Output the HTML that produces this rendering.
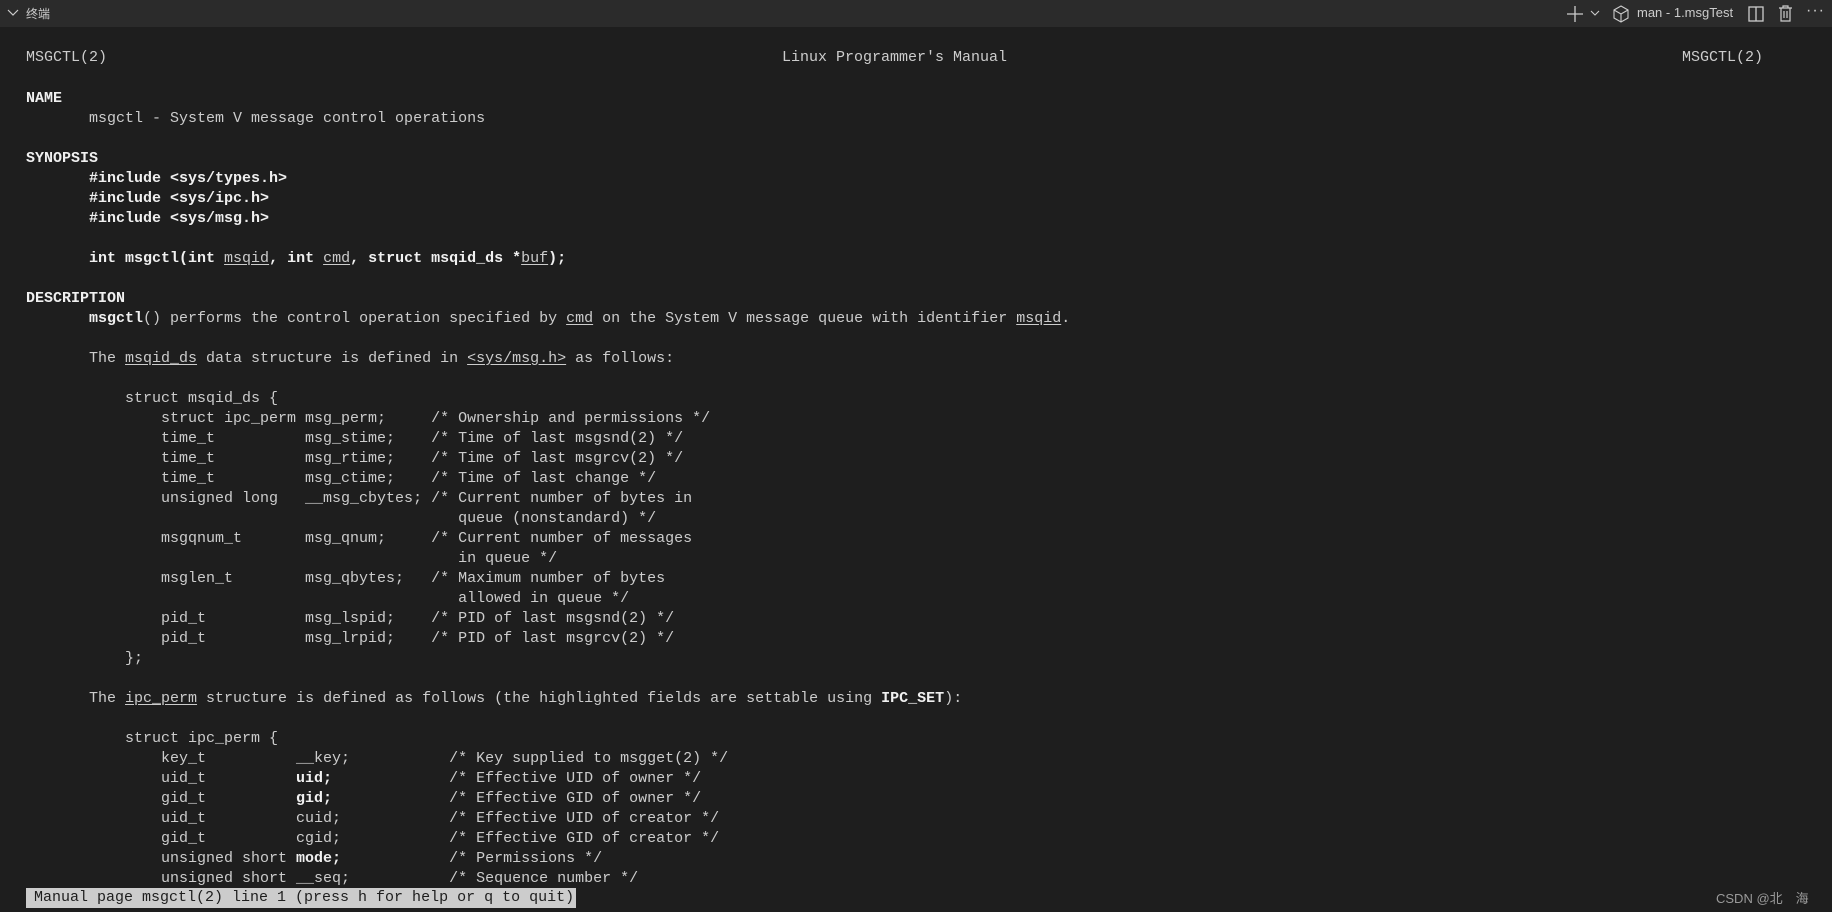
<!DOCTYPE html>
<html><head><meta charset="utf-8"><style>
html,body{margin:0;padding:0;width:1832px;height:912px;overflow:hidden;background:#1e1e1e;}
.hdr{position:absolute;left:0;top:0;width:1832px;height:27px;background:#2b2b2b;font-family:"Liberation Sans","Noto Sans CJK SC",sans-serif;color:#cccccc;font-size:13px;}
.hdr span{position:absolute;top:5px;}
pre{position:absolute;left:26px;top:49px;margin:0;font-family:"Liberation Mono",monospace;font-size:15px;line-height:20px;color:#cccccc;}
b{color:#f0f0f0;font-weight:bold}
u{text-decoration:underline;text-underline-offset:2px}
.t{position:absolute;top:48px;font-family:"Liberation Mono",monospace;font-size:15px;line-height:20px;color:#cccccc;}
.status{position:absolute;left:26px;top:888px;height:20px;background:#cccccc;color:#1e1e1e;font-family:"Liberation Mono",monospace;font-size:15px;line-height:20px;padding:0 2px 0 8px;}
.wm{position:absolute;left:1716px;top:888px;font-family:"Liberation Sans","Noto Sans CJK SC",sans-serif;font-size:13px;color:#9a9a9a;}
</style></head><body>
<div class="hdr">
<svg style="position:absolute;left:7px;top:8px" width="12" height="10"><path d="M1 2 L6 7 L11 2" stroke="#ccc" fill="none" stroke-width="1.2"/></svg>
<span style="left:26px;font-size:12px">终端</span>
<svg style="position:absolute;left:1566px;top:5px" width="18" height="18"><path d="M9 1V17M1 9H17" stroke="#ccc" stroke-width="1.3"/></svg>
<svg style="position:absolute;left:1590px;top:9px" width="10" height="8"><path d="M1 2L5 6L9 2" stroke="#ccc" fill="none" stroke-width="1.1"/></svg>
<svg style="position:absolute;left:1613px;top:5px" width="16" height="18"><path d="M8 1L15 5V13L8 17L1 13V5Z M1 5L8 9L15 5 M8 9V17" stroke="#ccc" fill="none" stroke-width="1.1"/></svg>
<span style="left:1637px">man - 1.msgTest</span>
<svg style="position:absolute;left:1748px;top:6px" width="16" height="16"><rect x="1" y="1" width="14" height="14" stroke="#ccc" fill="none" stroke-width="1.3"/><path d="M8 1V15" stroke="#ccc" stroke-width="1.3"/></svg>
<svg style="position:absolute;left:1778px;top:5px" width="15" height="17"><path d="M1 3H14 M5 3V1H10V3 M3 3V16H12V3 M6 6V13 M9 6V13" stroke="#ccc" fill="none" stroke-width="1.2"/></svg>
<span style="left:1806px;top:2px;font-size:16px;letter-spacing:1px">···</span>
</div>
<div class="t" style="left:26px">MSGCTL(2)</div>
<div class="t" style="left:782px">Linux Programmer's Manual</div>
<div class="t" style="left:1682px">MSGCTL(2)</div>
<pre>


<b>NAME</b>
       msgctl - System V message control operations

<b>SYNOPSIS</b>
       <b>#include &lt;sys/types.h&gt;</b>
       <b>#include &lt;sys/ipc.h&gt;</b>
       <b>#include &lt;sys/msg.h&gt;</b>

       <b>int msgctl(int </b><u>msqid</u><b>, int </b><u>cmd</u><b>, struct msqid_ds *</b><u>buf</u><b>);</b>

<b>DESCRIPTION</b>
       <b>msgctl</b>() performs the control operation specified by <u>cmd</u> on the System V message queue with identifier <u>msqid</u>.

       The <u>msqid_ds</u> data structure is defined in <u>&lt;sys/msg.h&gt;</u> as follows:

           struct msqid_ds {
               struct ipc_perm msg_perm;     /* Ownership and permissions */
               time_t          msg_stime;    /* Time of last msgsnd(2) */
               time_t          msg_rtime;    /* Time of last msgrcv(2) */
               time_t          msg_ctime;    /* Time of last change */
               unsigned long   __msg_cbytes; /* Current number of bytes in
                                                queue (nonstandard) */
               msgqnum_t       msg_qnum;     /* Current number of messages
                                                in queue */
               msglen_t        msg_qbytes;   /* Maximum number of bytes
                                                allowed in queue */
               pid_t           msg_lspid;    /* PID of last msgsnd(2) */
               pid_t           msg_lrpid;    /* PID of last msgrcv(2) */
           };

       The <u>ipc_perm</u> structure is defined as follows (the highlighted fields are settable using <b>IPC_SET</b>):

           struct ipc_perm {
               key_t          __key;           /* Key supplied to msgget(2) */
               uid_t          <b>uid;</b>             /* Effective UID of owner */
               gid_t          <b>gid;</b>             /* Effective GID of owner */
               uid_t          cuid;            /* Effective UID of creator */
               gid_t          cgid;            /* Effective GID of creator */
               unsigned short <b>mode;</b>            /* Permissions */
               unsigned short __seq;           /* Sequence number */
</pre>
<div class="status">Manual page msgctl(2) line 1 (press h for help or q to quit)</div>
<div class="wm">CSDN @北　海</div>
</body></html>
